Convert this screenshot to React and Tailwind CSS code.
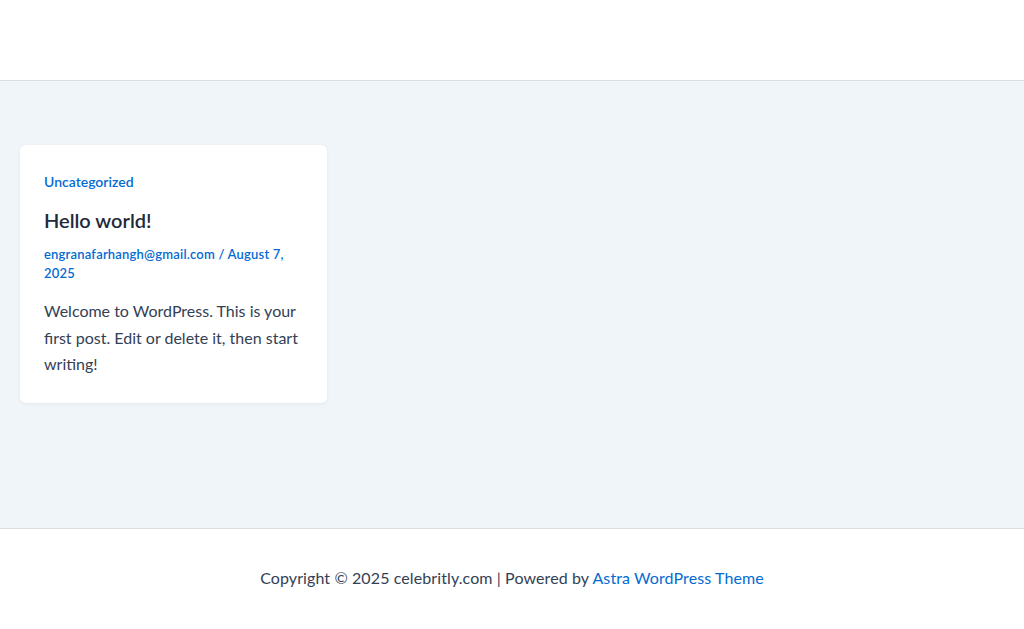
export default function App() {
  return (
    <div className="min-h-screen bg-white font-['Lato','Noto_Sans',sans-serif] text-[#334155]">
      <header className="h-[81px] border-b border-[#dddddd] bg-white" />

      <main className="bg-[#f0f5fa] px-5 pt-16 pb-[125px]">
        <article className="w-[307px] rounded-md bg-white px-6 pt-[27px] pb-[25px] shadow-[0_1px_4px_rgba(0,0,0,0.06)]">
          <a href="#" className="block text-[14px] font-semibold leading-[20px] text-[#046bd2]">
            Uncategorized
          </a>
          <h2 className="mt-[16px] text-[20px] font-semibold leading-[24px] text-[#1e293b]">
            Hello world!
          </h2>
          <p className="mt-[13px] text-[13px] font-semibold leading-[19px] tracking-[0.2px] text-[#046bd2]">
            <a href="#">engranafarhangh@gmail.com</a> / August 7, 2025
          </p>
          <p className="mt-[15px] text-[16px] leading-[26.5px] text-[#334155]">
            Welcome to WordPress. This is your first post. Edit or delete it, then start writing!
          </p>
        </article>
      </main>

      <footer className="flex h-[100px] items-center justify-center border-t border-[#dddddd] bg-white">
        <p className="text-[16px] tracking-[0.1px] text-[#334155]">
          Copyright © 2025 celebritly.com | Powered by{" "}
          <a href="#" className="text-[#046bd2]">Astra WordPress Theme</a>
        </p>
      </footer>
    </div>
  );
}
